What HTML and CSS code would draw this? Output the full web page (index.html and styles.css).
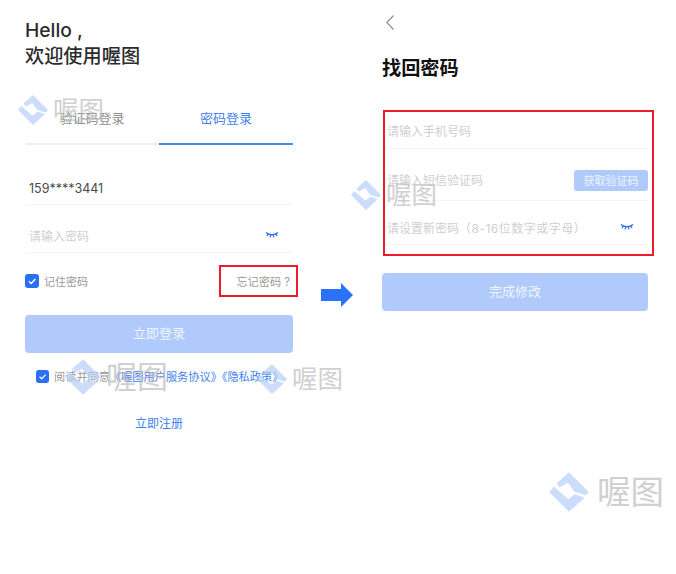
FILE: index.html
```html
<!DOCTYPE html>
<html lang="zh-CN">
<head>
<meta charset="utf-8">
<title>喔图</title>
<link rel="stylesheet" href="styles.css">
</head>
<body>
<main class="page">
  <section class="login">
    <h1 class="hello">Hello ,<br>欢迎使用喔图</h1>
    <div class="tabs">
      <div class="tab">验证码登录</div>
      <div class="tab active">密码登录</div>
    </div>
    <div class="field phone">159****3441</div>
    <div class="field pass"><span class="ph">请输入密码</span>
      <svg class="eye" viewBox="0 0 14 8"><path d="M1 1.5C4 4.5 10 4.5 13 1.5M3 3.4 2 5M5.6 4.3 5.2 6.4M8.4 4.3 8.8 6.4M11 3.4 12 5" /></svg>
    </div>
    <div class="opts">
      <label class="remember"><svg class="check" viewBox="0 0 14 14"><rect width="14" height="14" rx="3"/><path d="M3.8 7.2 6.2 9.4 10.4 5"/></svg>记住密码</label>
      <a class="forgot">忘记密码 ?</a>
    </div>
    <button class="btn login-btn">立即登录</button>
    <div class="agree"><svg class="check small" viewBox="0 0 14 14"><rect width="14" height="14" rx="3"/><path d="M3.8 7.2 6.2 9.4 10.4 5"/></svg>阅读并同意<span class="link">《喔图用户服务协议》《隐私政策》</span></div>
    <a class="register">立即注册</a>
  </section>

  <svg class="arrow" viewBox="0 0 32 24"><path d="M0 6H20V0L32 12 20 24V18H0Z"/></svg>

  <section class="reset">
    <svg class="back" viewBox="0 0 8 15"><path d="M7.5 .5.8 7.5 7.5 14.5"/></svg>
    <h2 class="title">找回密码</h2>
    <div class="redbox">
      <div class="rrow r1"><span class="ph">请输入手机号码</span></div>
      <div class="rrow r2"><span class="ph">请输入短信验证码</span><button class="code">获取验证码</button></div>
      <div class="rrow r3"><span class="ph">请设置新密码<span class="hint">（8-16位数字或字母）</span></span>
        <svg class="eye" viewBox="0 0 14 8"><path d="M1 1.5C4 4.5 10 4.5 13 1.5M3 3.4 2 5M5.6 4.3 5.2 6.4M8.4 4.3 8.8 6.4M11 3.4 12 5" /></svg>
      </div>
    </div>
    <button class="btn done-btn">完成修改</button>
  </section>

  <div class="wm wm1"><svg viewBox="0 0 32 32"><path d="M16 2 30 16 28.500 17.800 20.500 15 15.500 8 9 11.500 7.500 9.500ZM4.500 13 15.500 22.500 20.500 18.500 26.500 20.500 16 30 2 16Z"/></svg><span>喔图</span></div>
  <div class="wm wm2"><svg viewBox="0 0 32 32"><path d="M16 2 30 16 28.500 17.800 20.500 15 15.500 8 9 11.500 7.500 9.500ZM4.500 13 15.500 22.500 20.500 18.500 26.500 20.500 16 30 2 16Z"/></svg><span>喔图</span></div>
  <div class="wm wm3"><svg viewBox="0 0 32 32"><path d="M16 2 30 16 28.500 17.800 20.500 15 15.500 8 9 11.500 7.500 9.500ZM4.500 13 15.500 22.500 20.500 18.500 26.500 20.500 16 30 2 16Z"/></svg><span>喔图</span></div>
  <div class="wm wm4"><svg viewBox="0 0 32 32"><path d="M16 2 30 16 28.500 17.800 20.500 15 15.500 8 9 11.500 7.500 9.500ZM4.500 13 15.500 22.500 20.500 18.500 26.500 20.500 16 30 2 16Z"/></svg><span>喔图</span></div>
  <div class="wm wm5"><svg viewBox="0 0 32 32"><path d="M16 2 30 16 28.500 17.800 20.500 15 15.500 8 9 11.500 7.500 9.500ZM4.500 13 15.500 22.500 20.500 18.500 26.500 20.500 16 30 2 16Z"/></svg><span>喔图</span></div>
</main>
</body>
</html>
```
FILE: styles.css
```css
* { box-sizing: border-box; }
html, body { margin: 0; padding: 0; background: #fff; }
body { font-family: "Inter", "Noto Sans CJK SC", sans-serif; color: #333; overflow: hidden; }
.page { position: relative; width: 676px; height: 574px; display: flex; align-items: flex-start; padding-left: 25px; }

.login { width: 268px; padding-top: 17px; display: flex; flex-direction: column; }
.hello { margin: 0; font-size: 19.2px; line-height: 26px; font-weight: 500; color: #2c2c2c; }

.tabs { display: flex; margin-top: 34px; height: 42px; }
.tab { flex: 1; text-align: center; font-size: 13px; line-height: 30px; color: #8f8f8f; border-bottom: 2px solid #f0eef2; }
.tab.active { color: #3f7ff0; border-bottom-color: #4a86f2; }

.field { height: 48px; display: flex; align-items: center; justify-content: space-between; padding: 14px 14px 0 4px; border-bottom: 1px solid #f4f4f6; font-size: 12.5px; }
.phone { height: 60px; padding-top: 28px; color: #4a4a4a; }
.ph { color: #cfcfcf; font-size: 12px; }
.eye { width: 14px; height: 8px; fill: none; stroke: #2f6ff0; stroke-width: 1.3; flex: none; margin-top: -2px; }

.opts { display: flex; justify-content: space-between; align-items: center; height: 32px; margin-top: 12px; font-size: 11px; color: #9a9a9a; margin-right: -5px; }
.remember { display: flex; align-items: center; gap: 5px; }
.check { width: 14px; height: 14px; flex: none; }
.check rect { fill: #2b6ff5; }
.check path { fill: none; stroke: #fff; stroke-width: 1.4; }
.forgot { width: 79px; height: 32px; border: 2px solid #ec1c2b; display: flex; align-items: center; justify-content: flex-end; padding-right: 6px; white-space: pre; font-size: 11.2px; }

.btn { display: block; border: 0; padding: 0 0 4px; border-radius: 4px; background: #b0cafc; color: #f0f5ff; font: inherit; font-size: 13px; height: 38px; }
.login-btn { width: 268px; margin-top: 18px; }

.agree { display: flex; align-items: center; margin: 16px 0 0 11px; height: 14px; font-size: 11.2px; color: #9a9a9a; white-space: nowrap; }
.check.small { width: 13px; height: 13px; margin-right: 5px; }
.link { color: #3f7ff0; }
.register { align-self: center; margin-top: 32px; font-size: 12px; line-height: 18px; color: #3f7ff0; }

.arrow { width: 32px; height: 24px; fill: #2b72fb; margin: 283px 0 0 28px; flex: none; }

.reset { width: 272px; margin-left: 29px; display: flex; flex-direction: column; }
.back { width: 8px; height: 15px; margin: 15px 0 0 4px; fill: none; stroke: #8a8a8a; stroke-width: 1.1; }
.title { margin: 23px 0 0; font-size: 19.2px; line-height: 30px; font-weight: 700; color: #111; }
.redbox { width: 271px; height: 146px; margin: 27px 0 0 1px; border: 2px solid #ec1c2b; padding: 0 4px 0 2px; }
.rrow { display: flex; align-items: center; justify-content: space-between; border-bottom: 1px solid #f4f4f6; }
.r1 { height: 37px; padding-top: 1px; }
.r2 { height: 52px; padding-top: 10px; }
.r3 { height: 44px; padding: 10px 14px 0 0; }
.hint { letter-spacing: .5px; }
.code { width: 74px; height: 21px; border: 0; padding: 0; border-radius: 3px; background: #b0cafc; color: #eef4ff; font: inherit; font-size: 11px; margin-top: 1px; }
.done-btn { width: 266px; margin-top: 17px; }

.wm { position: absolute; display: flex; align-items: center; gap: 4px; opacity: .7; }
.wm svg { width: 32px; height: 32px; fill: #b7cffb; stroke: #b7cffb; stroke-width: 1.5; stroke-linejoin: round; flex: none; }
.wm span { font-size: 25.5px; line-height: 32px; font-weight: 400; color: #bdbdbd; }
.wm1 { left: 17px; top: 94px; }
.wm2 { left: 64px; top: 358px; }
.wm2 svg { width: 38px; height: 38px; }
.wm2 span { font-size: 31px; }
.wm3 { left: 256px; top: 363px; }
.wm4 { left: 350px; top: 179px; }
.wm5 { left: 548px; top: 471px; gap: 7px; }
.wm5 svg { width: 42px; height: 42px; }
.wm5 span { font-size: 33.5px; }
```
